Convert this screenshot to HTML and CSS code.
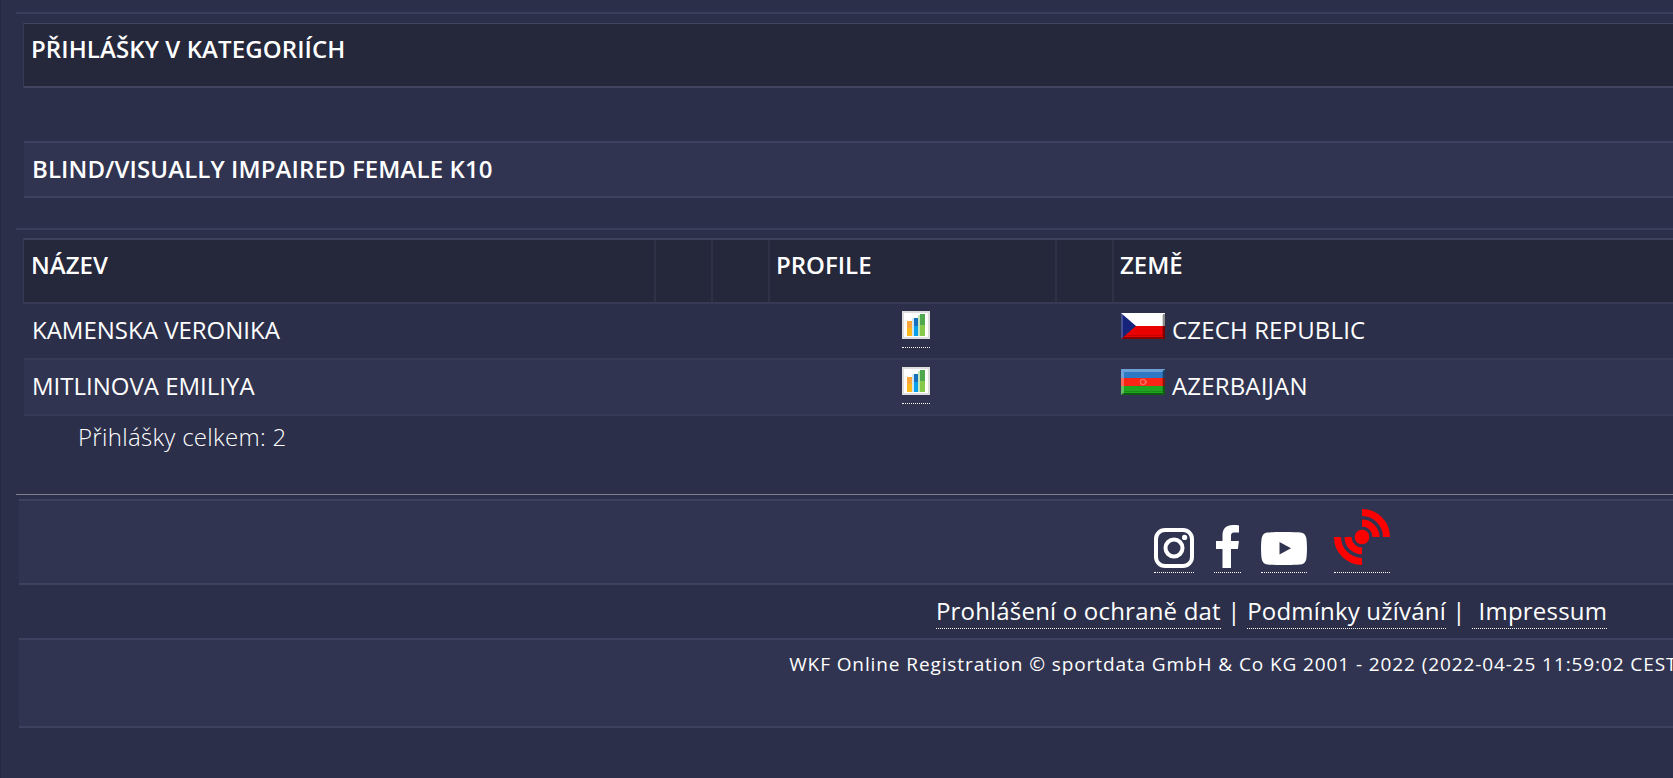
FILE: index.html
```
<!DOCTYPE html>
<html lang="cs">
  <head>
    <meta charset="UTF-8" />
    <title>WKF Online Registration</title>
    <link rel="stylesheet" href="styles.css">
  </head>
  <body>
    <div class="page">
      <div class="content">
        <div class="title-bar">PŘIHLÁŠKY V KATEGORIÍCH</div>
        <div class="category">BLIND/VISUALLY IMPAIRED FEMALE K10</div>
      </div>

      <div class="content entries">
        <div class="row head">
          <div>NÁZEV</div>
          <div></div>
          <div></div>
          <div>PROFILE</div>
          <div></div>
          <div>ZEMĚ</div>
        </div>
        <div class="row">
          <div>KAMENSKA VERONIKA</div>
          <div></div>
          <div></div>
          <div class="profile">
            <a href="#">
              <svg width="28" height="28" viewBox="0 0 28 28">
                <rect width="28" height="28" fill="#dedede" />
                <rect x="2" y="2" width="24" height="24" fill="#fff" />
                <rect x="5" y="10" width="5" height="15" fill="#fbbb1c" />
                <rect x="5" y="10" width="5" height="7" fill="#fba63a" />
                <rect x="10" y="7" width="2" height="18" fill="#cfe6f3" />
                <rect x="12" y="7" width="4" height="18" fill="#08a0ea" />
                <rect x="12" y="7" width="4" height="8" fill="#1670bd" />
                <rect x="16" y="4" width="2" height="21" fill="#c5e5bd" />
                <rect x="18" y="3" width="5" height="22" fill="#86c84a" />
                <rect x="18" y="3" width="5" height="11" fill="#4fa84e" />
              </svg>
            </a>
          </div>
          <div></div>
          <div class="country">
            <svg width="44" height="26" viewBox="0 0 44 26">
              <rect width="44" height="13" fill="#fff" />
              <rect y="13" width="44" height="13" fill="#e90000" />
              <path d="M0 0L15 13L0 26z" fill="#15237b" />
              <path d="M0 0h2v26h-2z" fill="#fff" opacity=".2" />
              <path d="M42 1h2v25H0l2-2h40z" opacity=".45" />
              <path d="M41 2h1v21H3v-1h38z" opacity=".15" />
            </svg>
            <span>CZECH REPUBLIC</span>
          </div>
        </div>
        <div class="row odd">
          <div>MITLINOVA EMILIYA</div>
          <div></div>
          <div></div>
          <div class="profile">
            <a href="#">
              <svg width="28" height="28" viewBox="0 0 28 28">
                <rect width="28" height="28" fill="#dedede" />
                <rect x="2" y="2" width="24" height="24" fill="#fff" />
                <rect x="5" y="10" width="5" height="15" fill="#fbbb1c" />
                <rect x="5" y="10" width="5" height="7" fill="#fba63a" />
                <rect x="10" y="7" width="2" height="18" fill="#cfe6f3" />
                <rect x="12" y="7" width="4" height="18" fill="#08a0ea" />
                <rect x="12" y="7" width="4" height="8" fill="#1670bd" />
                <rect x="16" y="4" width="2" height="21" fill="#c5e5bd" />
                <rect x="18" y="3" width="5" height="22" fill="#86c84a" />
                <rect x="18" y="3" width="5" height="11" fill="#4fa84e" />
              </svg>
            </a>
          </div>
          <div></div>
          <div class="country">
            <svg width="44" height="26" viewBox="0 0 44 26">
              <rect width="44" height="9" fill="#2f78c4" />
              <rect y="9" width="44" height="8" fill="#fb2415" />
              <rect y="17" width="44" height="9" fill="#1fa51f" />
              <circle cx="22" cy="13" r="2.6" fill="none" stroke="#ff6a60" stroke-width="1.4" />
              <circle cx="25" cy="13" r="1.2" fill="#ff6a60" />
              <path d="M0 0h44l-2 3H3v22l-3 1z" fill="#fff" opacity=".3" />
              <path d="M42 1h2v25H0l2-2h40z" opacity=".45" />
              <path d="M41 2h1v21H3v-1h38z" opacity=".15" />
            </svg>
            <span>AZERBAIJAN</span>
          </div>
        </div>
        <p class="total">Přihlášky celkem: 2</p>
      </div>

      <div class="footer">
        <div class="social">
          <a href="#">
            <svg width="40" height="40" viewBox="0 0 40 40" fill="none" stroke="#fff">
              <rect x="2" y="2" width="36" height="36" rx="9" stroke-width="4" />
              <circle cx="20" cy="20" r="8.5" stroke-width="4" />
              <circle cx="30.6" cy="9.4" r="2.6" fill="#fff" stroke="none" />
            </svg>
          </a>
          <a href="#">
            <svg width="27" height="43" viewBox="0 0 27 43">
              <path d="M25 .4v7h-4.200c-3.200 0-3.800 1.500-3.800 3.700V16h7.900l-1 8H17v19H8.500V24H2v-8h6.500v-5.800C8.500 3.600 12.500 0 18.700 0c2.800 0 5.300.2 6.300.4z" fill="#fff" />
            </svg>
          </a>
          <a href="#">
            <svg class="youtube" width="46" height="33" viewBox="0 0 46 33">
              <path fill-rule="evenodd" d="M23 0C31 0 36.500.2 39.500.5C43 .8 44.700 3 45.300 6C46.200 11 46.200 22 45.300 27C44.700 30 43 32.200 39.500 32.500C33.500 33.100 12.500 33.100 6.500 32.500C3 32.200 1.300 30 .7 27C-.2 22-.2 11 .7 6C1.300 3 3 .8 6.500.5C9.500.2 15 0 23 0zM18.500 10v12.500L30 16.200z" fill="#fff" />
            </svg>
          </a>
          <a class="live" href="#">
            <svg width="56" height="56" viewBox="0 0 56 56" fill="none" stroke="#f00" stroke-width="7">
              <circle cx="28" cy="28" r="7.300" fill="#f00" stroke="none" />
              <path d="M28 14a14 14 0 0 1 14 14M28 3.500A24.500 24.500 0 0 1 52.500 28M28 42a14 14 0 0 1-14-14M28 52.500A24.500 24.500 0 0 1 3.500 28" />
            </svg>
          </a>
        </div>
        <div class="links">
          <a href="#">Prohlášení o ochraně dat</a> | <a href="#">Podmínky užívání</a> | <a href="#">&nbsp;Impressum</a>
        </div>
        <div class="copyright">WKF Online Registration © sportdata GmbH &amp; Co KG 2001 - 2022 (2022-04-25 11:59:02 CEST)</div>
      </div>
    </div>
  </body>
</html>
```
FILE: styles.css
```
* {
  box-sizing: border-box;
}

body {
  margin: 0;
  height: 778px;
  overflow: hidden;
  background: #2c2f4a;
  color: #fff;
  font-family: "Open Sans", sans-serif;
  font-size: 24px;
  line-height: 33px;
  letter-spacing: 0.1px;
}

a {
  color: #fff;
  text-decoration: none;
  border-bottom: 1px dotted #fff;
}

svg {
  display: block;
}

.page {
  width: 2524px;
  height: 778px;
  padding: 12px 0 0 15px;
  border-left: 1px solid #252844;
}

/* Sections */
.content {
  height: 216px;
  padding: 9px 0 0 7px;
  border-top: 2px solid #3a3d5b;
}

.title-bar {
  height: 65px;
  padding: 8px 7px;
  background: #25273b;
  border: 1px solid #42455f;
  border-left-color: #363a52;
  border-bottom-width: 2px;
  font-weight: 600;
}

.category {
  height: 57px;
  margin: 53px 0 0 1px;
  padding: 9px 8px;
  background: #313450;
  border-top: 2px solid #3e415f;
  border-bottom: 2px solid #3e415f;
  font-weight: 600;
}

/* Entries */
.entries {
  height: 266px;
  padding-top: 8px;
}

.row {
  display: grid;
  grid-template-columns: 630px 57px 57px 287px 57px 1fr;
  height: 56px;
  margin-left: 1px;
  border-bottom: 2px solid #373a55;
  letter-spacing: 0;
}

.row > div {
  padding: 9px 8px;
}

.row.odd {
  background: #313450;
}

.row.head {
  height: 66px;
  margin-left: 0;
  background: #25273b;
  border-top: 2px solid #3e415b;
  border-left: 1px solid #363a52;
  font-weight: 600;
}

.row.head > div {
  padding: 8px 7px;
}

.row.head > div + div {
  padding-left: 6px;
  border-left: 2px solid #2f3247;
}

.row > .profile {
  display: flex;
  justify-content: center;
  padding: 7px 0 0 9px;
}

.profile a {
  height: 37px;
}

.row > .country {
  display: flex;
  gap: 7px;
  padding-left: 9px;
  letter-spacing: 0.15px;
}

.total {
  margin: 4px 0 0 55px;
  font-weight: 300;
  letter-spacing: 0.3px;
}

/* Footer */
.footer {
  position: relative;
  margin-left: 3px;
  padding-top: 5px;
  text-align: center;
}

.footer::before {
  content: "";
  position: absolute;
  left: -3px;
  right: 0;
  top: 0;
  border-top: 1px solid #7d808c;
}

.social {
  display: flex;
  justify-content: center;
  align-items: flex-end;
  gap: 20px;
  height: 86px;
  padding-bottom: 10px;
  background: #313450;
  border-top: 2px solid #3e415f;
  border-bottom: 2px solid #3e415f;
}

.social a {
  padding-bottom: 4px;
}

.youtube {
  margin-bottom: 3px;
}

.social .live {
  margin-left: 7px;
  padding-bottom: 7px;
}

.links {
  height: 53px;
  padding-top: 9px;
  letter-spacing: 0.2px;
}

.links a {
  padding-bottom: 1px;
}

.copyright {
  height: 90px;
  padding: 8px 70px 0 0;
  background: #313450;
  border-top: 2px solid #3e415f;
  border-bottom: 2px solid #3e415f;
  font-size: 19px;
  letter-spacing: 0.9px;
}
```
